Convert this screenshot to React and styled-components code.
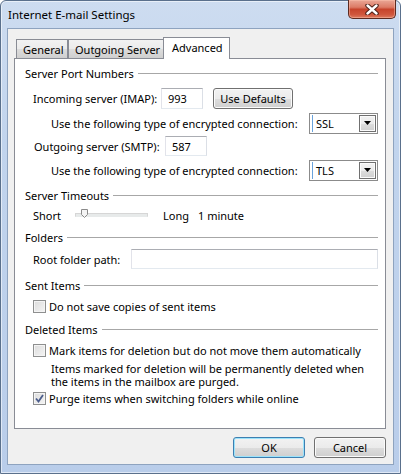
import React from "react";
import styled, { createGlobalStyle, css } from "styled-components";

const GlobalStyle = createGlobalStyle`
  html, body {
    margin: 0;
    padding: 0;
    width: 401px;
    height: 474px;
    overflow: hidden;
    background: #ffffff;
  }
  * {
    box-sizing: border-box;
  }
`;

const Window = styled.div`
  width: 401px;
  height: 474px;
  display: flex;
  flex-direction: column;
  border: 1px solid #5a708c;
  border-radius: 6px 6px 0 0;
  background: linear-gradient(180deg, #cddcf0 0%, #c1d4ed 30%, #b9cdea 100%);
  box-shadow: inset 0 0 0 1px rgba(255, 255, 255, 0.55);
  font-family: "Noto Sans", "Open Sans", sans-serif;
  font-size: 11px;
  color: #000;
`;

const TitleBar = styled.div`
  height: 27px;
  display: flex;
  justify-content: space-between;
  align-items: flex-start;
  padding-left: 7px;
  padding-right: 4px;
`;

const Title = styled.div`
  font-size: 11.5px;
  line-height: 28px;
  color: #000;
`;

const CloseButton = styled.div`
  width: 48px;
  height: 19px;
  margin-top: -1px;
  border: 1px solid #5c2a20;
  border-top: none;
  border-radius: 0 0 5px 5px;
  background: linear-gradient(180deg, #eaa796 0%, #dc7b66 40%, #c7442c 52%, #cf563c 80%, #dc7a5f 100%);
  box-shadow: inset 0 0 0 1px rgba(255, 200, 180, 0.45);
  display: flex;
  align-items: center;
  justify-content: center;
`;

const Client = styled.div`
  flex: 1;
  margin: 0 6px 8px 6px;
  background: #f0f0f0;
  border: 1px solid #8ea3bf;
  display: flex;
  flex-direction: column;
  padding-top: 8px;
`;

const TabStrip = styled.div`
  height: 21px;
  display: flex;
  align-items: flex-end;
  margin: 0 7px 0 8px;
`;

const Tab = styled.div`
  height: 19px;
  width: ${(p) => p.$w}px;
  border: 1px solid #898c95;
  border-bottom: none;
  background: linear-gradient(180deg, #f2f2f2 0%, #ebebeb 50%, #dddddd 51%, #cfcfcf 100%);
  display: flex;
  align-items: center;
  padding-left: 6px;
  white-space: nowrap;
  ${(p) =>
    p.$active &&
    css`
      height: 22px;
      margin-bottom: -1px;
      margin-left: -1px;
      padding-left: 8px;
      padding-bottom: 2px;
      background: #ffffff;
      position: relative;
      z-index: 1;
    `}
`;

const Panel = styled.div`
  height: 371px;
  margin: 0 7px 0 6px;
  background: #ffffff;
  border: 1px solid #898c95;
  padding: 0 7px 0 10px;
  display: flex;
  flex-direction: column;
`;

const GroupHeading = styled.div`
  height: 16px;
  margin-top: ${(p) => p.$mt}px;
  display: flex;
  align-items: center;
  gap: 4px;
  white-space: nowrap;
  &::after {
    content: "";
    flex: 1;
    height: 1px;
    background: #a7a7a7;
  }
`;

const Row = styled.div`
  height: ${(p) => p.$h || 22}px;
  margin-top: ${(p) => p.$mt}px;
  padding-left: ${(p) => p.$indent || 8}px;
  display: flex;
  align-items: center;
  white-space: nowrap;
`;

const Label = styled.span`
  width: ${(p) => (p.$w ? `${p.$w}px` : "auto")};
  margin-left: ${(p) => p.$ml || 0}px;
  flex-shrink: 0;
`;

const TextBox = styled.div`
  height: ${(p) => p.$h || 21}px;
  width: ${(p) => (p.$w ? `${p.$w}px` : "auto")};
  flex: ${(p) => (p.$w ? "none" : 1)};
  border: 1px solid;
  border-color: #abadb3 #dbdfe6 #e3e9ef #e2e3ea;
  background: #fff;
  display: flex;
  align-items: center;
  padding-left: 6px;
`;

const PushButton = styled.div`
  height: 21px;
  width: ${(p) => p.$w}px;
  margin-left: ${(p) => p.$ml || 0}px;
  border: 1px solid ${(p) => (p.$default ? "#3c7fb1" : "#707070")};
  border-radius: 3px;
  background: linear-gradient(180deg, #f2f2f2 0%, #ebebeb 50%, #dddddd 51%, #cfcfcf 100%);
  box-shadow: inset 0 0 0 1px ${(p) => (p.$default ? "#9ce3fb" : "#fbfbfb")};
  display: flex;
  align-items: center;
  justify-content: center;
`;

const Select = styled.div`
  margin-left: auto;
  width: 69px;
  height: 21px;
  border: 1px solid #8b8b8b;
  background: #fff;
  display: flex;
  align-items: center;
  padding: 1px;
`;

const SelectText = styled.div`
  flex: 1;
  height: 100%;
  display: flex;
  align-items: center;
  padding-left: 3px;
  border-left: 1px solid #6aa3dc;
  margin-left: 1px;
`;

const DropButton = styled.div`
  width: 17px;
  height: 17px;
  border: 1px solid #707070;
  background: linear-gradient(180deg, #f2f2f2 0%, #ebebeb 50%, #dddddd 51%, #cfcfcf 100%);
  box-shadow: inset 0 0 0 1px #fbfbfb;
  display: flex;
  align-items: center;
  justify-content: center;
`;

const SliderWrap = styled.div`
  width: 73px;
  height: 12px;
  position: relative;
  flex-shrink: 0;
`;

const Track = styled.div`
  position: absolute;
  left: 0;
  right: 0;
  top: 4px;
  height: 4px;
  border: 1px solid #d6d6d6;
  border-bottom-color: #e7eaea;
  background: #e7eaea;
`;

const Thumb = styled.svg`
  position: absolute;
  left: 6px;
  top: 0;
`;

const Box = styled.div`
  width: 13px;
  height: 13px;
  flex-shrink: 0;
  border: 1px solid #8e8f8f;
  background: linear-gradient(135deg, #dcdcdc 0%, #f4f4f4 100%);
  box-shadow: inset 0 0 0 1px #f4f4f4;
  margin-right: 3px;
  display: flex;
  align-items: center;
  justify-content: center;
`;

const Note = styled.div`
  margin-top: ${(p) => p.$mt}px;
  padding-left: 26px;
  line-height: 13px;
  white-space: nowrap;
`;

const ButtonBar = styled.div`
  margin: 8px 7px 0 0;
  display: flex;
  justify-content: flex-end;
  gap: 9px;
`;

const Arrow = () => (
  <svg width="7" height="4" viewBox="0 0 7 4">
    <path d="M0 0 H7 L3.5 4 Z" fill="#000" />
  </svg>
);

const Combo = ({ value }) => (
  <Select>
    <SelectText>{value}</SelectText>
    <DropButton>
      <Arrow />
    </DropButton>
  </Select>
);

const Check = ({ checked }) => (
  <Box>
    {checked && (
      <svg width="9" height="9" viewBox="0 0 9 9">
        <path d="M1 4.5 L3.5 7.5 L8 1" fill="none" stroke="#4b5d8c" strokeWidth="1.8" />
      </svg>
    )}
  </Box>
);

const App = () => (
  <>
    <GlobalStyle />
    <Window>
      <TitleBar>
        <Title>Internet E-mail Settings</Title>
        <CloseButton>
          <svg width="14" height="11" viewBox="0 0 14 11">
            <path d="M2.5 1.5 L11.5 9.5 M11.5 1.5 L2.5 9.5" stroke="#4a1e16" strokeWidth="4.4" strokeLinecap="round" />
            <path d="M2.5 1.5 L11.5 9.5 M11.5 1.5 L2.5 9.5" stroke="#ffffff" strokeWidth="2.4" strokeLinecap="round" />
          </svg>
        </CloseButton>
      </TitleBar>
      <Client>
        <TabStrip>
          <Tab $w={52}>General</Tab>
          <Tab $w={96}>Outgoing Server</Tab>
          <Tab $w={67} $active>Advanced</Tab>
        </TabStrip>
        <Panel>
          <GroupHeading $mt={6}>Server Port Numbers</GroupHeading>
          <Row $mt={6}>
            <Label $w={128}>Incoming server (IMAP):</Label>
            <TextBox $w={42}>993</TextBox>
            <PushButton $w={80} $ml={10}>Use Defaults</PushButton>
          </Row>
          <Row $mt={3} $indent={26}>
            <Label>Use the following type of encrypted connection:</Label>
            <Combo value="SSL" />
          </Row>
          <Row $mt={1} $indent={9}>
            <Label $w={131}>Outgoing server (SMTP):</Label>
            <TextBox $w={42} $h={20}>587</TextBox>
          </Row>
          <Row $mt={2} $indent={26}>
            <Label>Use the following type of encrypted connection:</Label>
            <Combo value="TLS" />
          </Row>
          <GroupHeading $mt={6}>Server Timeouts</GroupHeading>
          <Row $mt={2} $h={20}>
            <Label $w={42}>Short</Label>
            <SliderWrap>
              <Track />
              <Thumb width="7" height="9" viewBox="0 0 7 9">
                <path d="M0.5 0.5 H6.5 V5.5 L3.5 8.5 L0.5 5.5 Z" fill="#f4f4f4" stroke="#8a8a8a" />
              </Thumb>
            </SliderWrap>
            <Label $w={35} $ml={15}>Long</Label>
            <Label>1 minute</Label>
          </Row>
          <GroupHeading $mt={4}>Folders</GroupHeading>
          <Row $mt={3}>
            <Label $w={98}>Root folder path:</Label>
            <TextBox $h={20} />
          </Row>
          <GroupHeading $mt={7}>Sent Items</GroupHeading>
          <Row $mt={4} $h={18}>
            <Check />
            <Label>Do not save copies of sent items</Label>
          </Row>
          <GroupHeading $mt={6}>Deleted Items</GroupHeading>
          <Row $mt={4} $h={18}>
            <Check />
            <Label>Mark items for deletion but do not move them automatically</Label>
          </Row>
          <Note $mt={3}>
            Items marked for deletion will be permanently deleted when
            <br />
            the items in the mailbox are purged.
          </Note>
          <Row $mt={1} $h={18}>
            <Check checked />
            <Label>Purge items when switching folders while online</Label>
          </Row>
        </Panel>
        <ButtonBar>
          <PushButton $w={72} $default>OK</PushButton>
          <PushButton $w={72}>Cancel</PushButton>
        </ButtonBar>
      </Client>
    </Window>
  </>
);

export default App;
